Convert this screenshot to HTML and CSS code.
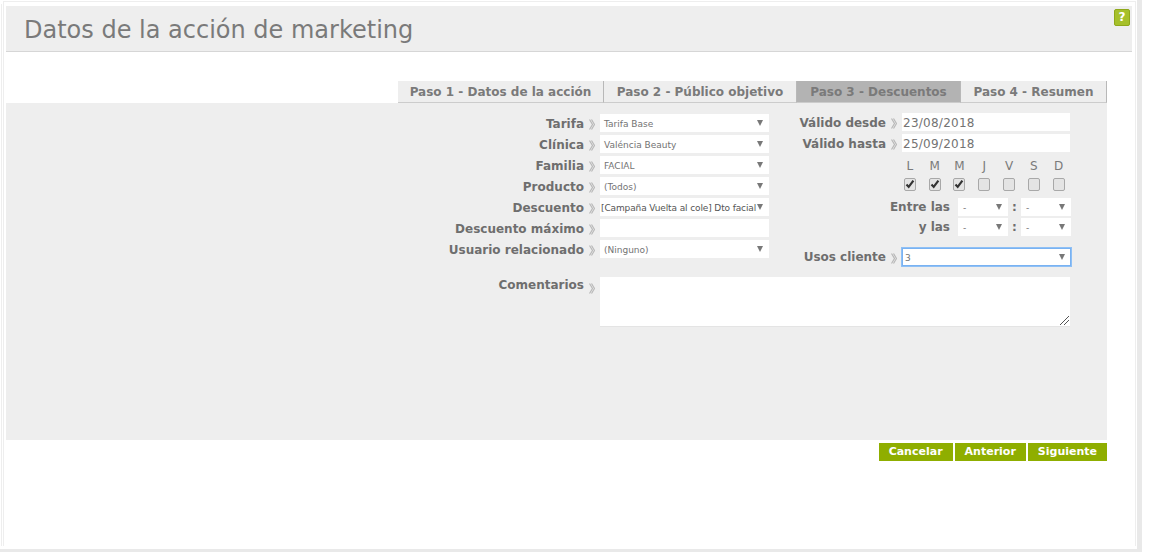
FILE: index.html
```html
<!DOCTYPE html>
<html lang="es">
<head>
    <meta charset="UTF-8">
    <title>Datos de la acción de marketing</title>
    <link rel="stylesheet" href="styles.css">
</head>
<body>
    <svg class="sprites" width="0" height="0">
        <symbol id="sep" viewBox="0 0 6 11">
            <path d="M.5 .5l3 5-3 5M2.5 .5l3 5-3 5" fill="none" stroke="#b8b8b8" stroke-width="1.2"/>
        </symbol>
        <symbol id="tick" viewBox="0 0 10 10">
            <path d="M1.5 5.5l2.2 2.4L8.4 1.6" fill="none" stroke="#333" stroke-width="2.2"/>
        </symbol>
    </svg>

    <div class="corner"></div>
    <div class="frame">
        <!-- Header -->
        <div class="title-bar">
            <h1>Datos de la acción de marketing</h1>
        </div>
        <a class="help">?</a>

        <!-- Tabs -->
        <div class="tabs">
            <div class="tab step-1">Paso 1 - Datos de la acción</div>
            <div class="tab step-2">Paso 2 - Público objetivo</div>
            <div class="tab step-3 active">Paso 3 - Descuentos</div>
            <div class="tab step-4">Paso 4 - Resumen</div>
        </div>

        <!-- Form -->
        <div class="panel">
            <div class="columns">
                <div class="col-left">
                    <div class="row">
                        <label>Tarifa</label><svg class="sep"><use href="#sep"/></svg>
                        <div class="select small">Tarifa Base</div>
                    </div>
                    <div class="row">
                        <label>Clínica</label><svg class="sep"><use href="#sep"/></svg>
                        <div class="select small">Valéncia Beauty</div>
                    </div>
                    <div class="row">
                        <label>Familia</label><svg class="sep"><use href="#sep"/></svg>
                        <div class="select small">FACIAL</div>
                    </div>
                    <div class="row">
                        <label>Producto</label><svg class="sep"><use href="#sep"/></svg>
                        <div class="select small">(Todos)</div>
                    </div>
                    <div class="row">
                        <label>Descuento</label><svg class="sep"><use href="#sep"/></svg>
                        <div class="select small dark">[Campaña Vuelta al cole] Dto facial</div>
                    </div>
                    <div class="row">
                        <label>Descuento máximo</label><svg class="sep"><use href="#sep"/></svg>
                        <div class="input"></div>
                    </div>
                    <div class="row">
                        <label>Usuario relacionado</label><svg class="sep"><use href="#sep"/></svg>
                        <div class="select small">(Ninguno)</div>
                    </div>
                </div>

                <div class="col-right">
                    <div class="row">
                        <label>Válido desde</label><svg class="sep"><use href="#sep"/></svg>
                        <div class="input">23/08/2018</div>
                    </div>
                    <div class="row">
                        <label>Válido hasta</label><svg class="sep"><use href="#sep"/></svg>
                        <div class="input">25/09/2018</div>
                    </div>
                    <div class="days">
                        <span>L</span><span>M</span><span>M</span><span>J</span><span>V</span><span>S</span><span>D</span>
                        <i class="check"><svg><use href="#tick"/></svg></i>
                        <i class="check"><svg><use href="#tick"/></svg></i>
                        <i class="check"><svg><use href="#tick"/></svg></i>
                        <i class="check"></i>
                        <i class="check"></i>
                        <i class="check"></i>
                        <i class="check"></i>
                    </div>
                    <div class="time-row">
                        <label>Entre las</label>
                        <div class="select time">-</div>
                        <b>:</b>
                        <div class="select time">-</div>
                    </div>
                    <div class="time-row">
                        <label>y las</label>
                        <div class="select time">-</div>
                        <b>:</b>
                        <div class="select time">-</div>
                    </div>
                    <div class="row usos">
                        <label>Usos cliente</label><svg class="sep"><use href="#sep"/></svg>
                        <div class="select small focus">3</div>
                    </div>
                </div>
            </div>

            <div class="row comments">
                <label>Comentarios</label><svg class="sep"><use href="#sep"/></svg>
                <div class="textarea">
                    <svg class="grip" width="9" height="9"><path d="M0 9L9 0M4 9L9 4" stroke="#555" fill="none"/></svg>
                </div>
            </div>
        </div>

        <!-- Buttons -->
        <div class="buttons">
            <button>Cancelar</button>
            <button>Anterior</button>
            <button>Siguiente</button>
        </div>
    </div>
</body>
</html>
```

FILE: styles.css
```css
html, body {
    margin: 0;
    height: 100%;
    overflow: hidden;
}
body {
    font-family: "DejaVu Sans", Verdana, sans-serif;
    background-color: #ffffff;
    color: #737373;
    height: 552px;
}
.sprites {
    display: block;
    height: 0;
}
.corner {
    position: absolute;
    left: 0;
    top: 0;
    width: 2px;
    height: 4px;
    background-color: #9ab800;
}
.frame {
    position: relative;
    box-sizing: border-box;
    width: 1142px;
    height: 552px;
    padding: 6px 0 0 6px;
    border-bottom: 3px solid #e9e9e9;
    border-right: 5px solid #e9e9e9;
    background-color: #ffffff;
}
.frame::before {
    content: "";
    position: absolute;
    left: 3px;
    top: 1px;
    bottom: 3px;
    right: 1px;
    border: 1px solid #eeeeee;
    border-bottom: none;
    pointer-events: none;
}
.frame::after {
    content: "";
    position: absolute;
    left: 1px;
    top: 4px;
    bottom: 3px;
    width: 1px;
    background-color: #eeeeee;
}
.title-bar {
    height: 45px;
    background-color: #eeeeee;
    border-bottom: 1px solid #d6d6d6;
    width: 1126px;
}
h1 {
    margin: 0;
    padding: 9px 0 0 18px;
    font-size: 24px;
    line-height: 30px;
    font-weight: normal;
    color: #7a7a7a;
}
.help {
    position: absolute;
    left: 1114px;
    top: 9px;
    width: 16px;
    height: 17px;
    box-sizing: border-box;
    background-color: #a6c02a;
    border: 1px solid #8fa81a;
    border-radius: 2px;
    color: #ffffff;
    font-size: 12px;
    font-weight: bold;
    line-height: 15px;
    text-align: center;
}
.tabs {
    display: flex;
    justify-content: flex-end;
    margin-top: 29px;
    width: 1101px;
    height: 22px;
}
.tab {
    box-sizing: border-box;
    flex: none;
    height: 22px;
    background-color: #eeeeee;
    border-right: 1px solid #b8b8b8;
    border-bottom: 1px solid #cccccc;
    font-size: 12px;
    font-weight: bold;
    line-height: 23px;
    text-align: center;
    color: #7a7a7a;
}
.step-1 { width: 206px; }
.step-2 { width: 193px; }
.step-3 { width: 164px; }
.step-4 { width: 146px; }
.tab.active {
    background-color: #b3b3b3;
}
.panel {
    box-sizing: border-box;
    width: 1101px;
    height: 337px;
    background-color: #eeeeee;
    padding: 10px 0 0 0;
}
.columns {
    display: flex;
}
.col-left {
    width: 763px;
    padding-top: 1px;
}
.col-right {
    width: 301px;
}
.row {
    display: flex;
    justify-content: flex-end;
    align-items: center;
    height: 18px;
    margin-bottom: 3px;
}
label {
    font-size: 12px;
    font-weight: bold;
    color: #6e6e6e;
    white-space: nowrap;
}
.row label {
    padding-top: 2px;
}
.sep {
    width: 6px;
    height: 11px;
    margin: 2px 5px 0 5px;
    flex: none;
}
.select, .input {
    box-sizing: border-box;
    height: 18px;
    background-color: #ffffff;
    font-size: 12px;
    line-height: 20px;
    color: #737373;
    white-space: nowrap;
    overflow: hidden;
    position: relative;
}
.col-left .select, .col-left .input {
    width: 169px;
}
.col-right .input {
    width: 168px;
    padding-left: 1px;
    letter-spacing: 0.25px;
}
.select.small {
    font-size: 9px;
    line-height: 20px;
    padding-left: 4px;
}
.select.dark {
    padding-left: 1px;
    color: #555555;
    letter-spacing: -0.12px;
}
.select::after {
    content: "";
    position: absolute;
    right: 6px;
    top: 6px;
    border-left: 3.5px solid transparent;
    border-right: 3.5px solid transparent;
    border-top: 6px solid #787878;
}
.days {
    display: grid;
    grid-template-columns: repeat(7, 24.8px);
    justify-items: center;
    align-content: start;
    margin-left: 128.5px;
    height: 41px;
    padding-top: 2px;
    font-size: 12px;
    color: #7a7a7a;
    line-height: 18px;
}
.check {
    display: block;
    box-sizing: border-box;
    width: 12px;
    height: 13px;
    margin-top: 3px;
    background-color: #e4e4e4;
    border: 1px solid #a8a8a8;
    border-radius: 2px;
}
.check svg {
    display: block;
    width: 10px;
    height: 10px;
}
.time-row {
    display: flex;
    justify-content: flex-end;
    align-items: center;
    height: 18px;
    margin-bottom: 2px;
    margin-right: -1px;
}
.time-row label {
    margin-right: 8px;
}
.time-row b {
    width: 13px;
    text-align: center;
    font-size: 12px;
    color: #6e6e6e;
}
.select.time {
    width: 50px;
    padding-left: 5px;
    font-size: 9px;
    line-height: 20px;
}
.usos {
    margin-top: 12px;
    margin-right: -1px;
}
.usos label {
    padding-top: 0;
}
.usos .select {
    width: 169px;
}
.select.focus {
    height: 18px;
    outline: 1px solid #8fc0f5;
    border: 1px solid #79b2f2;
    line-height: 18px;
    padding-left: 2px;
}
.select.focus::after {
    top: 5px;
    right: 5px;
}
.comments {
    align-items: flex-start;
    justify-content: flex-start;
    height: 50px;
    margin-top: 8px;
}
.comments label {
    width: 578px;
    padding-top: 1px;
    text-align: right;
}
.comments .sep {
    margin-top: 6px;
}
.textarea {
    position: relative;
    width: 470px;
    height: 50px;
    background-color: #ffffff;
    border-bottom: 1px solid #e4e4e4;
    box-sizing: border-box;
}
.grip {
    position: absolute;
    right: 1px;
    bottom: 1px;
}
.buttons {
    display: flex;
    justify-content: flex-end;
    gap: 2px;
    width: 1101px;
    margin-top: 3px;
}
button {
    height: 18px;
    padding: 0 10px;
    border: 0;
    background-color: #8fae00;
    color: #ffffff;
    font-family: inherit;
    font-size: 11px;
    font-weight: bold;
    line-height: 18px;
}
```
